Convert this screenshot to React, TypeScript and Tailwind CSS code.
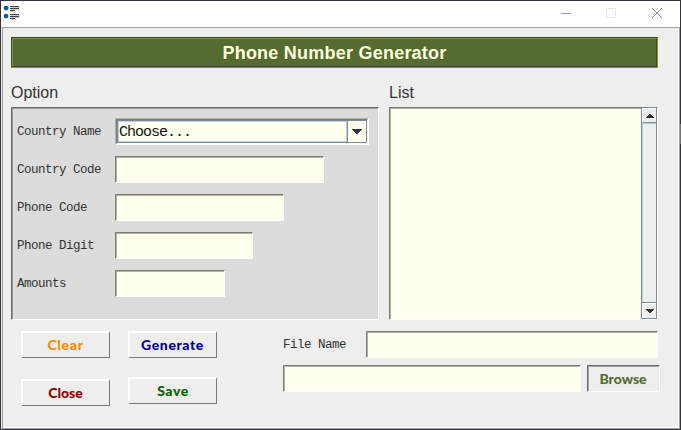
import React from "react";

const lowered =
  "border border-t-[#7d7d72] border-l-[#7d7d72] border-r-white border-b-white bg-[#ffffee]";

function Field({ className }: { className: string }) {
  return (
    <div className={`h-[27px] ${lowered} ${className}`}>
      <div className="h-full w-full border-t border-l border-[#b2b2a6]" />
    </div>
  );
}

function Label({ text }: { text: string }) {
  return (
    <span className="block whitespace-pre font-['Liberation_Mono','Courier_New',monospace] text-[12.5px] leading-[29px] tracking-[-0.5px] text-[#333]">
      {text}
    </span>
  );
}

function Row({ text, width }: { text: string; width: string }) {
  return (
    <div className="flex h-[27px]">
      <div className="w-[98px] shrink-0">
        <Label text={text} />
      </div>
      <Field className={width} />
    </div>
  );
}

function RaisedButton({ text, className }: { text: string; className: string }) {
  return (
    <button
      className={`flex h-[27px] w-[89px] items-center justify-center border-t-2 border-l-2 border-r border-b border-t-white border-l-white border-r-[#777] border-b-[#777] bg-[#eee] font-['Lato',sans-serif] text-[14px] font-black leading-none ${className}`}
    >
      {text}
    </button>
  );
}

function Arrow({ up = false, wide = false }: { up?: boolean; wide?: boolean }) {
  return wide ? (
    <svg width="10" height="5" viewBox="0 0 10 5" shapeRendering="crispEdges" fill="#333">
      <path d="M0 0h10v1H9v1H8v1H7v1H6v1H4V4H3V3H2V2H1V1H0z" />
    </svg>
  ) : (
    <svg
      width="8"
      height="4"
      viewBox="0 0 8 4"
      shapeRendering="crispEdges"
      fill="#333"
      className={up ? "rotate-180" : ""}
    >
      <path d="M0 0h8v1H7v1H6v1H5v1H3V3H2V2H1V1H0z" />
    </svg>
  );
}

function TitleBar() {
  return (
    <div className="flex h-[26px] shrink-0 justify-between bg-white">
      <svg width="20" height="20" viewBox="0 0 20 20" className="ml-[2px] mt-[3px]">
        <g fill="#005b9f">
          <circle cx="3.1" cy="4.1" r="2.4" />
          <circle cx="3.1" cy="12.1" r="2.4" />
        </g>
        <g shapeRendering="crispEdges">
          <path fill="#ccc" d="M8 3h9v1H8zM8 5h9v1H8zM8 7h5v1H8zM8 11h9v1H8zM8 13h9v1H8zM8 15h5v1H8z" />
          <path fill="#444" d="M7 2h9v1H7zM7 4h9v1H7zM7 6h5v1H7zM7 10h9v1H7zM7 12h9v1H7zM7 14h5v1H7z" />
        </g>
      </svg>
      <svg width="104" height="20" viewBox="0 0 104 20" fill="none" className="mr-[15px] mt-[3px]">
        <path d="M0 9.5h10" stroke="#999" />
        <path d="M45.5 4.5h9v9h-9z" stroke="#e5e5e5" />
        <path d="M91 4l10 10M101 4l-10 10" stroke="#888" />
      </svg>
    </div>
  );
}

function ScrollBar() {
  return (
    <div className="-mt-[2px] flex w-4 flex-col border border-[#7a8a99] bg-[#eee]">
      <div className="flex h-[15px] items-center justify-center border-t border-l border-b border-t-white border-l-white border-b-[#7a8a99]">
        <Arrow up />
      </div>
      <div className="grow border-t border-l border-[#b8cfe5]" />
      <div className="flex h-4 items-center justify-center border-t border-[#7a8a99]">
        <div className="flex h-full w-full items-center justify-center border-t border-l border-white">
          <Arrow />
        </div>
      </div>
    </div>
  );
}

export default function App() {
  return (
    <div className="flex h-[430px] w-[681px] flex-col overflow-hidden bg-[#35313d]">
      <div className="flex h-[429px] pt-px">
        <div className="w-px shrink-0" />
        <div className="flex w-[679px] flex-col bg-[#eee]">
          <TitleBar />
          <div className="ml-px flex h-[402px] w-[678px] flex-col border border-[#a0a0a0]">
            <div className="flex h-full w-full flex-col border-r border-b border-white pl-2">
              <div className="mt-[9px] h-[31px] w-[647px] shrink-0 border border-t-[#3b4b21] border-l-[#3b4b21] border-r-[#789640] border-b-[#789640]">
                <h1 className="flex h-full items-center justify-center border border-t-[#789640] border-l-[#789640] border-r-[#3b4b21] border-b-[#3b4b21] bg-[#556b2f] font-['Liberation_Sans',Arial,sans-serif] text-[18px] leading-none font-bold tracking-[0.23px] text-[#ffffe0]">
                  Phone Number Generator
                </h1>
              </div>

              <div className="mt-[14px] flex h-[25px] shrink-0 font-['Liberation_Sans',Arial,sans-serif] text-[16px] leading-[21px] text-[#333]">
                <h2 className="w-[378px]">Option</h2>
                <h2>List</h2>
              </div>

              <div className="flex h-[213px] shrink-0 gap-[10px]">
                <section className="w-[368px] border border-t-[#6b6b6b] border-l-[#6b6b6b] border-r-white border-b-white">
                  <div className="flex h-full flex-col gap-[11px] border-t border-l border-[#9a9a9a] bg-[#dcdcdc] pt-[9px] pl-[4px]">
                    <div className="flex h-[27px]">
                      <div className="w-[98px] shrink-0">
                        <Label text="Country Name" />
                      </div>
                      <div className="w-[254px] border border-t-[#b2b2a6] border-l-[#b2b2a6] border-r-white border-b-white">
                        <div className="h-full border border-t-[#7d7d72] border-l-[#7d7d72] border-r-white border-b-white">
                          <div className="flex h-full border border-[#7a8a99] bg-[#ffffee]">
                            <div className="flex grow items-center border border-[#b8cfe5] pt-[2px] font-['Liberation_Mono','Courier_New',monospace] text-[15px] leading-none tracking-[-1px] text-[#111]">
                              Choose...
                            </div>
                            <div className="flex w-[19px] items-center justify-center border-l border-[#7a8a99]">
                              <Arrow wide />
                            </div>
                          </div>
                        </div>
                      </div>
                    </div>
                    <Row text="Country Code" width="w-[209px]" />
                    <Row text="Phone Code" width="w-[169px]" />
                    <Row text="Phone Digit" width="w-[138px]" />
                    <Row text="Amounts" width="w-[110px]" />
                  </div>
                </section>

                <section className={`w-[269px] ${lowered}`}>
                  <div className="flex h-full justify-end border-t border-l border-[#b2b2a6]">
                    <ScrollBar />
                  </div>
                </section>
              </div>

              <div className="flex pt-[11px]">
                <div className="ml-[10px] flex w-[89px] flex-col gap-[21px]">
                  <RaisedButton text="Clear" className="pr-px tracking-[0.7px] text-[#ff8c00]" />
                  <RaisedButton text="Close" className="pr-px tracking-[0px] text-[#8b0000]" />
                </div>
                <div className="ml-[18px] flex w-[89px] flex-col gap-[19px]">
                  <RaisedButton text="Generate" className="pr-px tracking-[0.6px] text-[#00008b]" />
                  <RaisedButton text="Save" className="tracking-[0.6px] text-[#006400]" />
                </div>
                <div className="ml-[66px] flex flex-col gap-[7px]">
                  <div className="flex h-[27px]">
                    <div className="w-[83px]">
                      <Label text="File Name" />
                    </div>
                    <Field className="w-[292px]" />
                  </div>
                  <div className="flex gap-[6px]">
                    <Field className="w-[298px]" />
                    <button className="h-[27px] w-[73px] border border-t-[#6b6b6b] border-l-[#6b6b6b] border-r-white border-b-white bg-[#eee]">
                      <span className="flex h-full items-center justify-center border-t border-l border-[#a6a6a6] pr-[2px] font-['Lato',sans-serif] text-[14px] font-black leading-none text-[#556b2f]">
                        Browse
                      </span>
                    </button>
                  </div>
                </div>
              </div>
            </div>
          </div>
        </div>
        <div className="w-px pt-[123px]">
          <div className="h-[20px] bg-[#777]" />
        </div>
      </div>
    </div>
  );
}
